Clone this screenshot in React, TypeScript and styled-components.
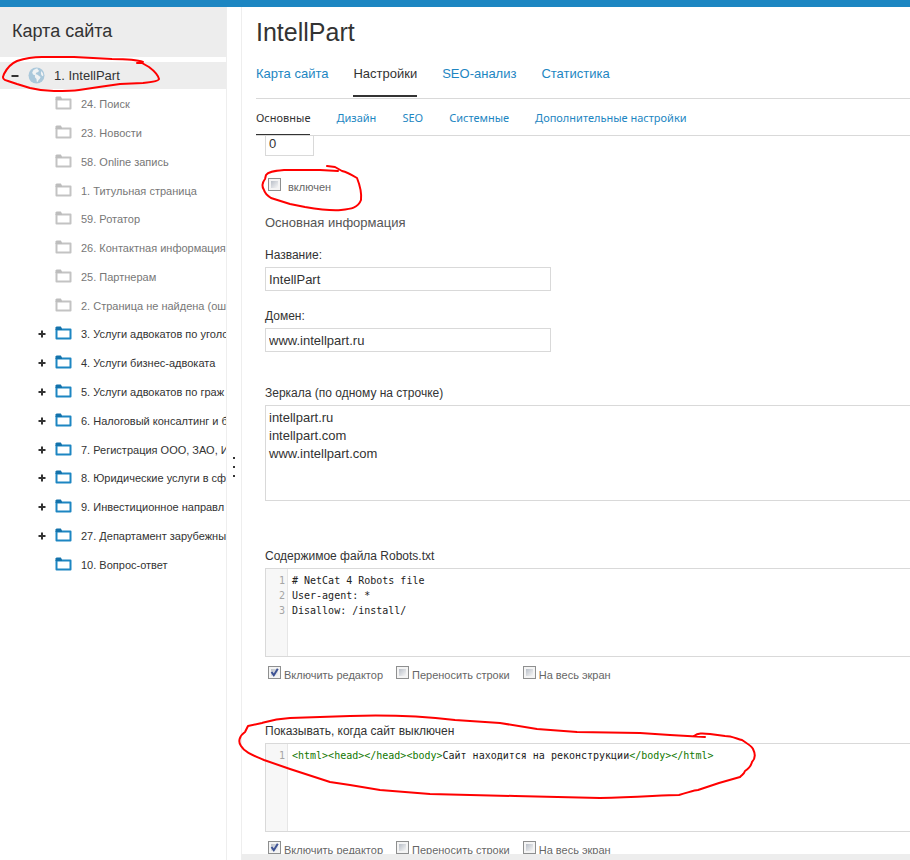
import React from "react";
import styled, { createGlobalStyle, css } from "styled-components";

const sans = '"Liberation Sans", Arial, sans-serif';
const mono = '"DejaVu Sans Mono", Consolas, monospace';
const blue = "#1d86c2";
const dark = "#333333";
const line = "#d9d9d9";

const GlobalStyle = createGlobalStyle`
  *, *::before, *::after { box-sizing: border-box; }
  body { margin: 0; background: #fff; color: ${dark}; font-family: ${sans}; font-size: 13px; }
`;

const Page = styled.div`
  position: relative;
  display: flex;
  flex-direction: column;
  height: 100vh;
  overflow: hidden;
`;
const TopBar = styled.header`
  flex: none;
  height: 7px;
  background: ${blue};
`;
const Columns = styled.div`
  display: flex;
  flex: 1;
  min-height: 0;
`;

const Sidebar = styled.aside`
  flex: none;
  width: 227px;
  border-right: 1px solid #eeeeee;
  overflow: hidden;
`;
const SidebarTitle = styled.h2`
  margin: 0 0 5px;
  padding: 0 12px 2px;
  background: #ededed;
  font-size: 18px;
  font-weight: 400;
  line-height: 48px;
`;
const RootItem = styled.div`
  display: flex;
  align-items: center;
  height: 27px;
  padding-left: 11px;
  background: #ededed;
`;
const Toggle = styled.button`
  display: flex;
  flex: none;
  width: 8px;
  height: 14px;
  padding: 0;
  border: 0;
  background: none;
  align-items: center;
  justify-content: center;
`;
const RootLink = styled.a`
  display: flex;
  align-items: center;
  gap: 9px;
  margin-left: 9px;
  color: ${dark};
  text-decoration: none;
`;
const Tree = styled.ul`
  display: grid;
  grid-auto-rows: 1fr;
  min-height: 490px;
  margin: 0;
  padding: 1px 0 0 38px;
  list-style: none;
`;
const TreeItem = styled.li`
  display: flex;
  align-items: center;
  min-width: 0;
`;
const ToggleSlot = styled.span`
  display: flex;
  flex: none;
  width: 17px;
`;
const TreeLink = styled.a<{ $muted: boolean }>`
  display: flex;
  align-items: center;
  gap: 9px;
  color: ${(p) => (p.$muted ? "#777777" : dark)};
  font-size: 11px;
  line-height: 14px;
  text-decoration: none;
  white-space: nowrap;
  svg { flex: none; margin-bottom: 2px; }
`;

const Splitter = styled.div`
  display: flex;
  flex: none;
  flex-direction: column;
  align-items: center;
  justify-content: center;
  gap: 7px;
  width: 15px;
  padding-top: 67px;
  border-right: 1px solid #eeeeee;
`;
const Dot = styled.i`
  width: 2px;
  height: 2px;
  background: ${dark};
`;

const Main = styled.main`
  display: flex;
  flex: 1;
  flex-direction: column;
  min-width: 0;
`;
const Title = styled.h1`
  margin: 0;
  padding: 10px 14px 0;
  font-size: 25px;
  font-weight: 400;
  line-height: 30px;
`;
const Tabs = styled.nav<{ $small?: boolean }>`
  display: flex;
  flex: none;
  margin-left: 14px;
  border-bottom: 1px solid ${line};
  ${(p) =>
    p.$small
      ? css`
          gap: 26px;
          height: 37px;
          font-family: "Noto Sans", "Open Sans", sans-serif;
          font-size: 11px;
          line-height: 38px;
        `
      : css`
          gap: 25px;
          height: 52px;
          font-size: 13px;
          line-height: 53px;
        `}
`;
const Tab = styled.a<{ $active?: boolean; $small?: boolean }>`
  color: ${(p) => (p.$active ? dark : blue)};
  height: ${(p) => (p.$small ? "36px" : "50px")};
  text-decoration: none;
  white-space: nowrap;
  border-bottom: ${(p) => (p.$small ? "1px" : "2px")} solid ${(p) => (p.$active ? dark : "transparent")};
`;

const Form = styled.form`
  flex: 1;
  min-height: 0;
  padding-left: 23px;
  overflow: hidden;
`;
const FooterBar = styled.footer`
  flex: none;
  height: 6px;
  background: #ededed;
`;
const Section = styled.h3`
  margin: 0;
  padding-top: 19px;
  color: #555555;
  font-size: 13px;
  font-weight: 400;
  line-height: 16px;
`;
const Field = styled.div<{ $gap: number }>`
  padding-top: ${(p) => p.$gap}px;
`;
const Label = styled.label`
  display: block;
  margin-bottom: 5px;
  font-size: 12px;
  line-height: 14px;
`;
const fieldBox = css`
  display: block;
  border: 1px solid ${line};
  border-radius: 0;
  outline: 0;
  background: #fff;
  color: ${dark};
  font-family: ${sans};
  font-size: 13px;
  padding: 0 3px;
`;
const Input = styled.input`
  ${fieldBox}
  width: 286px;
  max-width: 100%;
  height: 24px;
`;
const PriorityInput = styled.input`
  ${fieldBox}
  width: 49px;
  height: 20px;
  padding-bottom: 4px;
  border-top: 0;
`;
const TextArea = styled.textarea`
  ${fieldBox}
  width: 100%;
  height: 96px;
  padding-top: 3px;
  border-right: 0;
  line-height: 18px;
  resize: none;
`;

const CheckRow = styled.div<{ $gap: number }>`
  display: flex;
  gap: 13px;
  padding: ${(p) => p.$gap}px 0 0 3px;
`;
const CheckLabel = styled.label<{ $wide?: boolean }>`
  display: flex;
  gap: ${(p) => (p.$wide ? "7px" : "3px")};
  color: #666666;
  font-size: 11px;
  line-height: 18px;
  white-space: nowrap;
`;
const CheckFrame = styled.span`
  position: relative;
  flex: none;
  width: 13px;
  height: 13px;
  svg { position: absolute; inset: 0; pointer-events: none; display: none; }
  input:checked + svg { display: block; }
`;
const CheckInput = styled.input`
  display: block;
  appearance: none;
  width: 13px;
  height: 13px;
  margin: 0;
  border: 1px solid #8e8f8f;
  background: linear-gradient(135deg, #b9bfc8, #f6f6f6) content-box, #f4f4f4;
  padding: 2px;
`;

const Editor = styled.div`
  display: grid;
  grid-template-columns: 22px 1fr;
  height: 89px;
  border: 1px solid ${line};
  border-right: 0;
  font-family: ${mono};
  font-size: 10px;
  line-height: 15px;
`;
const Gutter = styled.div`
  padding: 4px 2px 0 0;
  border-right: 1px solid #e6e6e6;
  background: #f7f7f7;
  color: #a5a5a5;
  text-align: right;
`;
const Code = styled.pre`
  margin: 0;
  padding: 4px 4px 0;
  color: #222222;
  font: inherit;
  overflow: hidden;
`;
const TagText = styled.span`
  color: #117700;
`;

const Marks = styled.svg`
  position: absolute;
  top: 0;
  left: 0;
  pointer-events: none;
`;

const FolderIcon = ({ muted }: { muted: boolean }) => (
  <svg width="17" height="14" viewBox="0 0 17 14" fill="none">
    <path d="M1.500 3.500h14v9h-14z" stroke={muted ? "#c3c3c3" : blue} strokeWidth="2" strokeLinejoin="round" />
    <path d="M1.500.5h4.300l1.200 2v1.500H.5V1.500z" fill={muted ? "#bdbdbd" : "#1372ab"} />
  </svg>
);
const GlobeIcon = () => (
  <svg width="17" height="17" viewBox="0 0 17 17">
    <circle cx="8.500" cy="8.500" r="8" fill="#aac8db" />
    <path
      fill="#f1f3f4"
      d="M8.500 1.500l1.500.3-.3 1.200 1.500.5-1 1.500-2 .7-.6 1.600 1.500.2 2 1.500 1.500 1-.8 1.800-1.300 1.200-.8 2-1-.6-.2-2.500-1.600-1.600L7 8.200 5 7.500 4.200 5.500 5.500 3zM13.500 4l1.500 2.500.4 2-1 .8-1.200-1.600-.3-2z"
    />
  </svg>
);
const Sign = ({ plus }: { plus?: boolean }) => (
  <svg width="8" height="8" viewBox="0 0 8 8">
    <path d={plus ? "M.5 4h7M4 .5v7" : "M.5 4h7"} stroke={dark} strokeWidth="2" />
  </svg>
);

const Check = ({ id, label, checked, wide }: { id: string; label: string; checked?: boolean; wide?: boolean }) => (
  <CheckLabel htmlFor={id} $wide={wide}>
    <CheckFrame>
      <CheckInput type="checkbox" id={id} defaultChecked={checked} />
      <svg width="13" height="13" viewBox="0 0 13 13">
        <path d="M3.500 6l2.300 3.200L9.800 2.800" fill="none" stroke="#3d5294" strokeWidth="2" />
      </svg>
    </CheckFrame>
    {label}
  </CheckLabel>
);
const EditorOptions = ({ prefix }: { prefix: string }) => (
  <CheckRow $gap={9}>
    <Check id={`${prefix}-editor`} label="Включить редактор" checked />
    <Check id={`${prefix}-wrap`} label="Переносить строки" />
    <Check id={`${prefix}-full`} label="На весь экран" />
  </CheckRow>
);

type Node = { name: string; muted?: boolean; expandable?: boolean };
const nodes: Node[] = [
  { name: "24. Поиск", muted: true },
  { name: "23. Новости", muted: true },
  { name: "58. Online запись", muted: true },
  { name: "1. Титульная страница", muted: true },
  { name: "59. Ротатор", muted: true },
  { name: "26. Контактная информация", muted: true },
  { name: "25. Партнерам", muted: true },
  { name: "2. Страница не найдена (оши", muted: true },
  { name: "3. Услуги адвокатов по уголо", expandable: true },
  { name: "4. Услуги бизнес-адвоката", expandable: true },
  { name: "5. Услуги адвокатов по граж", expandable: true },
  { name: "6. Налоговый консалтинг и б", expandable: true },
  { name: "7. Регистрация ООО, ЗАО, И", expandable: true },
  { name: "8. Юридические услуги в сф", expandable: true },
  { name: "9. Инвестиционное направл", expandable: true },
  { name: "27. Департамент зарубежны", expandable: true },
  { name: "10. Вопрос-ответ" },
];
const tabs = ["Карта сайта", "Настройки", "SEO-анализ", "Статистика"];
const subTabs = ["Основные", "Дизайн", "SEO", "Системные", "Дополнительные настройки"];

export default function App() {
  return (
    <Page>
      <GlobalStyle />
      <TopBar />
      <Columns>
        <Sidebar>
          <SidebarTitle>Карта сайта</SidebarTitle>
          <RootItem>
            <Toggle type="button" aria-label="Свернуть"><Sign /></Toggle>
            <RootLink href="#site"><GlobeIcon />1. IntellPart</RootLink>
          </RootItem>
          <Tree>
            {nodes.map((n) => (
              <TreeItem key={n.name}>
                <ToggleSlot>
                  {n.expandable && <Toggle type="button" aria-label="Развернуть"><Sign plus /></Toggle>}
                </ToggleSlot>
                <TreeLink href="#node" $muted={!!n.muted}>
                  <FolderIcon muted={!!n.muted} />
                  {n.name}
                </TreeLink>
              </TreeItem>
            ))}
          </Tree>
        </Sidebar>
        <Splitter><Dot /><Dot /><Dot /></Splitter>
        <Main>
          <Title>IntellPart</Title>
          <Tabs>
            {tabs.map((t, i) => <Tab key={t} href="#tab" $active={i === 1}>{t}</Tab>)}
          </Tabs>
          <Tabs $small>
            {subTabs.map((t, i) => <Tab key={t} href="#subtab" $small $active={i === 0}>{t}</Tab>)}
          </Tabs>
          <Form>
            <PriorityInput aria-label="Приоритет" defaultValue="0" />
            <CheckRow $gap={22}>
              <Check id="enabled" label="включен" wide />
            </CheckRow>
            <Section>Основная информация</Section>
            <Field $gap={17}>
              <Label htmlFor="name">Название:</Label>
              <Input id="name" defaultValue="IntellPart" />
            </Field>
            <Field $gap={18}>
              <Label htmlFor="domain">Домен:</Label>
              <Input id="domain" defaultValue="www.intellpart.ru" />
            </Field>
            <Field $gap={34}>
              <Label htmlFor="mirrors">Зеркала (по одному на строчке)</Label>
              <TextArea id="mirrors" defaultValue={"intellpart.ru\nintellpart.com\nwww.intellpart.com"} />
            </Field>
            <Field $gap={48}>
              <Label as="div">Содержимое файла Robots.txt</Label>
              <Editor>
                <Gutter>1<br />2<br />3</Gutter>
                <Code>{"# NetCat 4 Robots file\nUser-agent: *\nDisallow: /install/"}</Code>
              </Editor>
              <EditorOptions prefix="robots" />
            </Field>
            <Field $gap={40}>
              <Label as="div">Показывать, когда сайт выключен</Label>
              <Editor>
                <Gutter>1</Gutter>
                <Code>
                  <TagText>{"<html><head></head><body>"}</TagText>
                  Сайт находится на реконструкции
                  <TagText>{"</body></html>"}</TagText>
                </Code>
              </Editor>
              <EditorOptions prefix="offline" />
            </Field>
          </Form>
          <FooterBar />
        </Main>
      </Columns>
      <Marks width="910" height="860" viewBox="0 0 910 860" fill="none" stroke="#ff0000" strokeWidth="2" strokeLinejoin="round" strokeLinecap="round" aria-hidden="true">
        <path d="M143 62C138 60 128 59 112 59L74 57 42 57C30 57 23 59 17 61 10 64 7 68 4 74 2 78 3 80 8 81L17 84 30 88C38 90 44 91 54 91 64 91 72 91 79 90L99 87 120 84 143 83C153 82 159 81 159 79 158 75 153 70 149 67L142 63 137 63" />
        <path d="M338 171L320 170 284 170C273 171 268 172 266 175L265 179C262 183 262 187 264 190 265 194 268 196 271 198L290 204 305 207C317 209 330 211 341 210 351 209 358 208 361 200 362 191 359 183 357 178 352 175 347 172 342 171L335 167 327 166" />
        <path d="M705 737L670 735 640 733 577 732 537 729 500 723 455 720C420 716 380 715 350 716L290 718C275 719 269 721 262 723L248 726 245 732C239 736 238 742 241 746 245 753 255 756 264 760L290 769 330 782 350 785 380 790 430 794C490 795 540 797 600 798 640 797 665 795 679 795 690 792 694 790 698 790L719 783 740 777C743 774 744 774 745 771 751 767 751 765 752 762 756 758 755 753 753 749 751 745 746 743 742 740 735 738 731 736 725 736L710 734C702 733 698 733 694 736" />
      </Marks>
    </Page>
  );
}
